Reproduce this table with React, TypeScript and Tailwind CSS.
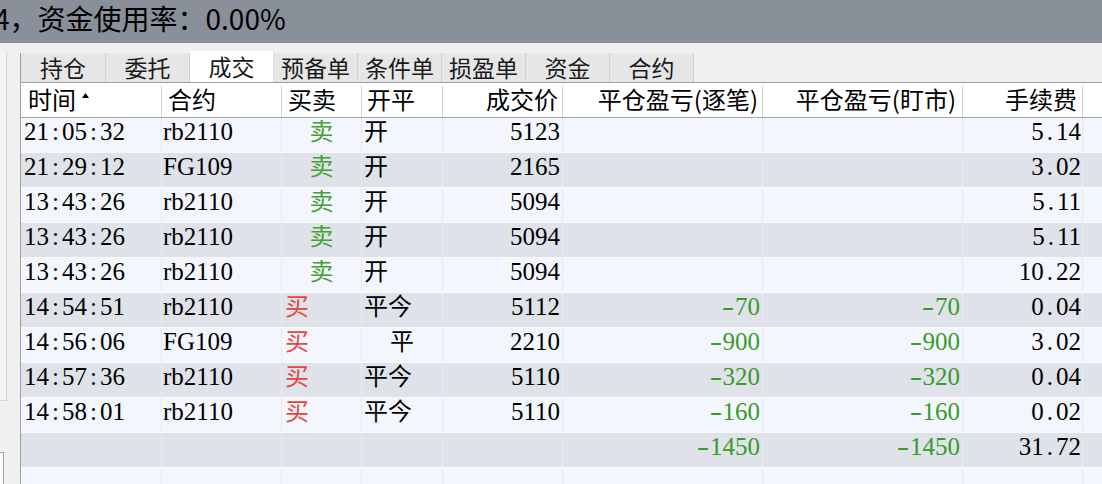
import React from "react";

const cjk = "font-['Noto_Sans_CJK_SC',sans-serif]";
const serif = "font-['Liberation_Serif','Noto_Sans_CJK_SC',serif]";

const tabs = ["持仓", "委托", "成交", "预备单", "条件单", "损盈单", "资金", "合约"];

const cols = [
  { w: "w-[141px]", head: "时间", headCls: "justify-start pl-[7px]" },
  { w: "w-[120px]", head: "合约", headCls: "justify-start pl-[6px]" },
  { w: "w-[80px]", head: "买卖", headCls: "justify-start pl-[6px]" },
  { w: "w-[81px]", head: "开平", headCls: "justify-start pl-[5px]" },
  { w: "w-[120px]", head: "成交价", headCls: "justify-end pr-[4px]" },
  { w: "w-[200px]", head: "平仓盈亏(逐笔)", headCls: "justify-end pr-[4px]" },
  { w: "w-[200px]", head: "平仓盈亏(盯市)", headCls: "justify-end pr-[6px]" },
  { w: "w-[120px]", head: "手续费", headCls: "justify-end pr-[5px]" },
];

const rows = [
  ["21:05:32", "rb2110", "卖", "开", "5123", "", "", "5.14"],
  ["21:29:12", "FG109", "卖", "开", "2165", "", "", "3.02"],
  ["13:43:26", "rb2110", "卖", "开", "5094", "", "", "5.11"],
  ["13:43:26", "rb2110", "卖", "开", "5094", "", "", "5.11"],
  ["13:43:26", "rb2110", "卖", "开", "5094", "", "", "10.22"],
  ["14:54:51", "rb2110", "买", "平今", "5112", "-70", "-70", "0.04"],
  ["14:56:06", "FG109", "买", "平", "2210", "-900", "-900", "3.02"],
  ["14:57:36", "rb2110", "买", "平今", "5110", "-320", "-320", "0.04"],
  ["14:58:01", "rb2110", "买", "平今", "5110", "-160", "-160", "0.02"],
  ["", "", "", "", "", "-1450", "-1450", "31.72"],
  ["", "", "", "", "", "", "", ""],
];

function Num({ v }: { v: string }) {
  return (
    <>
      {v.split("").map((ch, i) =>
        ch === ":" || ch === "." ? (
          <span key={i} className="px-[3px]">
            {ch}
          </span>
        ) : ch === "-" ? (
          <span key={i} className="inline-block w-[14px] text-center scale-x-[1.5]">
            {ch}
          </span>
        ) : (
          <span key={i}>{ch}</span>
        )
      )}
    </>
  );
}

function cellCls(ci: number, v: string) {
  switch (ci) {
    case 0:
      return `${serif} text-[25px] leading-[28px] pl-[3px] text-left`;
    case 1:
      return `${serif} text-[25px] leading-[28px] pl-[1px] text-left`;
    case 2:
      return v === "卖"
        ? `${cjk} text-[24px] leading-[24px] text-center text-[#46a035]`
        : `${cjk} text-[24px] leading-[24px] pl-[3px] text-left text-[#e5453b]`;
    case 3:
      return v === "平"
        ? `${cjk} text-[24px] leading-[24px] text-center`
        : `${cjk} text-[24px] leading-[24px] pl-[2px] text-left`;
    case 4:
      return `${serif} text-[25px] leading-[28px] pr-[2px] text-right`;
    case 5:
    case 6:
      return `${serif} text-[25px] leading-[28px] pr-[2px] text-right text-[#3b9a2b]`;
    default:
      return `${serif} text-[25px] leading-[28px] pr-[1px] text-right`;
  }
}

function LeftStrip() {
  return (
    <div className="w-[20px] shrink-0 flex flex-col">
      <div className="mt-[9px] h-[349px] w-[7px] bg-[#f5f5f5] border-r border-b border-[#d6d6d6]" />
      <div className="mt-[51px] flex-1 w-[4px] bg-white border-t border-r border-[#a3a3a3]" />
    </div>
  );
}

function TabStrip() {
  return (
    <div className="h-[40px] shrink-0 flex items-end border-b border-[#a0a0a0]">
      {tabs.map((t, i) => {
        const active = t === "成交";
        return (
          <div
            key={t}
            className={`flex items-center justify-center border-r text-[23px] leading-[23px] text-[#1a1a1a] ${cjk} ${
              i === 0 ? "w-[86px] border-l border-l-[#a0a0a0]" : "w-[84px]"
            } ${active ? "h-[31px] bg-white border-[#dcdcdc]" : "h-[29px] bg-[#e6e6e6] border-[#cfcfcf]"}`}
          >
            {t}
          </div>
        );
      })}
    </div>
  );
}

function Table() {
  return (
    <div className="flex-1 min-h-0 flex flex-col border-l border-[#a0a0a0] overflow-hidden">
      <div className="h-[35px] shrink-0 flex bg-white border-b border-[#a3a3a3]">
        {cols.map((c, ci) => (
          <div key={ci} className={`${c.w} h-full flex`}>
            <div
              className={`flex-1 flex items-center pb-[3px] text-[24px] leading-[30px] text-black whitespace-nowrap ${cjk} ${c.headCls}`}
            >
              {c.head}
              {ci === 0 && (
                <svg width="7" height="5" viewBox="0 0 7 5" className="ml-[6px] mb-[6px]">
                  <path d="M3.5 0L7 5H0z" fill="#000" />
                </svg>
              )}
            </div>
            <div className="w-px mt-[3px] bg-[#d2d2d2]" />
          </div>
        ))}
        <div className="flex-1" />
      </div>
      {rows.map((r, ri) => (
        <div
          key={ri}
          className={`h-[35px] shrink-0 flex border-b border-[#f8f9fb] text-black ${
            ri % 2 ? "bg-[#dfe3e9]" : "bg-[#f3f7fd]"
          }`}
        >
          {r.map((v, ci) => (
            <div
              key={ci}
              className={`${cols[ci].w} h-full border-r border-[#e6e9ee] whitespace-nowrap ${cellCls(ci, v)}`}
            >
              {ci === 2 || ci === 3 ? v : <Num v={v} />}
            </div>
          ))}
          <div className="flex-1" />
        </div>
      ))}
    </div>
  );
}

export default function App() {
  return (
    <div className={`w-[1102px] h-[484px] overflow-hidden bg-[#f0f0f0] flex flex-col ${cjk}`}>
      <div className="h-[43px] shrink-0 bg-[#8a9099] flex items-center pb-[7px] overflow-hidden">
        <span className="ml-[-6px] text-[28px] leading-[36px] text-black whitespace-nowrap">
          4，资金使用率：0.00%
        </span>
      </div>
      <div className="flex flex-1 min-h-0">
        <LeftStrip />
        <div className="flex-1 min-w-0 flex flex-col">
          <TabStrip />
          <Table />
        </div>
      </div>
    </div>
  );
}
